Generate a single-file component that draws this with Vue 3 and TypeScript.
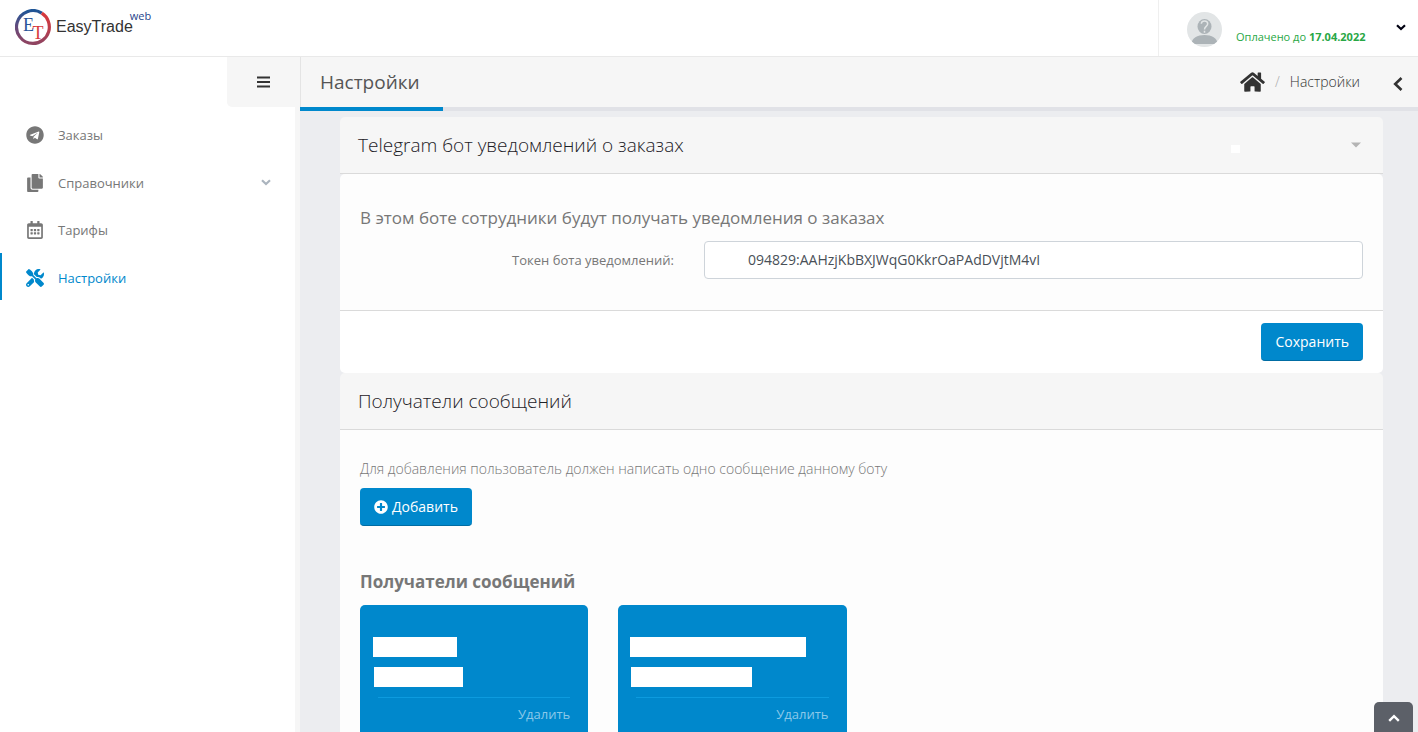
<script setup lang="ts">
import { ref } from 'vue'

interface MenuItem {
  label: string
  viewBox: string
  path: string
  active?: boolean
  expandable?: boolean
}

interface Recipient {
  id: number
  indent: number
  lines: { width: number; shift: number }[]
}

const token = ref('094829:AAHzjKbBXJWqG0KkrOaPAdDVjtM4vI')

const menu: MenuItem[] = [
  {
    label: 'Заказы',
    viewBox: '0 0 496 512',
    path: 'M248 8C111 8 0 119 0 256s111 248 248 248 248-111 248-248S385 8 248 8zm121.8 169.9l-40.7 191.8c-3 13.6-11.1 16.9-22.4 10.5l-62-45.7-29.9 28.8c-3.3 3.3-6.1 6.1-12.5 6.1l4.4-63.1 114.9-103.8c5-4.4-1.1-6.9-7.7-2.5l-142 89.4-61.2-19.1c-13.3-4.2-13.6-13.3 2.8-19.7l239.1-92.2c11.1-4 20.8 2.7 17.2 19.5z',
  },
  {
    label: 'Справочники',
    viewBox: '0 0 448 512',
    path: 'M320 448v40c0 13.255-10.745 24-24 24H24c-13.255 0-24-10.745-24-24V120c0-13.255 10.745-24 24-24h72v296c0 30.879 25.121 56 56 56h168zm0-344V0H152c-13.255 0-24 10.745-24 24v368c0 13.255 10.745 24 24 24h272c13.255 0 24-10.745 24-24V128H344c-13.2 0-24-10.8-24-24zm120.971-31.029L375.029 7.029A24 24 0 0 0 358.059 0H352v96h96v-6.059a24 24 0 0 0-7.029-16.97z',
    expandable: true,
  },
  {
    label: 'Тарифы',
    viewBox: '0 0 448 512',
    path: 'M148 288h-40c-6.6 0-12-5.4-12-12v-40c0-6.6 5.4-12 12-12h40c6.6 0 12 5.4 12 12v40c0 6.6-5.4 12-12 12zm108-12v-40c0-6.6-5.4-12-12-12h-40c-6.6 0-12 5.4-12 12v40c0 6.6 5.4 12 12 12h40c6.6 0 12-5.4 12-12zm96 0v-40c0-6.6-5.4-12-12-12h-40c-6.6 0-12 5.4-12 12v40c0 6.6 5.4 12 12 12h40c6.6 0 12-5.4 12-12zm-96 96v-40c0-6.6-5.4-12-12-12h-40c-6.6 0-12 5.4-12 12v40c0 6.6 5.4 12 12 12h40c6.6 0 12-5.4 12-12zm-96 0v-40c0-6.6-5.4-12-12-12h-40c-6.6 0-12 5.4-12 12v40c0 6.6 5.4 12 12 12h40c6.6 0 12-5.4 12-12zm192 0v-40c0-6.6-5.4-12-12-12h-40c-6.6 0-12 5.4-12 12v40c0 6.6 5.4 12 12 12h40c6.6 0 12-5.4 12-12zm96-260v352c0 26.5-21.5 48-48 48H48c-26.5 0-48-21.5-48-48V112c0-26.5 21.5-48 48-48h48V12c0-6.6 5.4-12 12-12h40c6.6 0 12 5.4 12 12v52h128V12c0-6.6 5.4-12 12-12h40c6.6 0 12 5.4 12 12v52h48c26.5 0 48 21.5 48 48zm-48 346V160H48v298c0 3.3 2.7 6 6 6h340c3.3 0 6-2.7 6-6z',
  },
  {
    label: 'Настройки',
    viewBox: '0 0 512 512',
    path: 'M501.1 395.7L384 278.6c-23.1-23.1-57.6-27.6-85.4-13.9L206 172L206 128C200 96 120 0 76 0L0 76C0 120 96 200 128 206L172 206L264.700 298.600c-13.6 27.8-9.2 62.3 13.9 85.4l117.1 117.1c14.6 14.6 38.2 14.6 52.7 0l52.7-52.7c14.5-14.6 14.5-38.2 0-52.7zM331.7 225c28.3 0 54.9 11 74.9 31l19.4 19.4c15.8-6.9 30.8-16.5 43.8-29.5 37.1-37.1 49.7-89.3 37.9-136.7-2.2-9-13.5-12.1-20.1-5.5l-74.4 74.4-67.9-11.3L334 98.9l74.4-74.4c6.6-6.6 3.4-17.9-5.7-20.2-47.4-11.7-99.6.9-136.6 37.9-28.5 28.5-41.9 66.1-41.2 103.6l82.1 82.1c8.1-1.9 16.5-2.9 24.7-2.9zm-103.9 82l-56.7-56.7L18.7 402.8c-25 25-25 65.5 0 90.5s65.5 25 90.5 0l123.6-123.6c-7.6-19.9-9.9-41.6-5-62.7zM64 472c-13.2 0-24-10.8-24-24 0-13.3 10.7-24 24-24s24 10.7 24 24c0 13.2-10.7 24-24 24z',
    active: true,
  },
]

const recipients: Recipient[] = [
  { id: 1, indent: 13, lines: [{ width: 84, shift: 0 }, { width: 89, shift: 1 }] },
  { id: 2, indent: 12, lines: [{ width: 176, shift: 0 }, { width: 121, shift: 1 }] },
]
</script>

<template>
  <div class="app">
    <header class="topbar">
      <a class="brand" href="#" aria-label="EasyTrade web">
        <svg class="brand-mark" viewBox="0 0 36 36" aria-hidden="true">
          <defs>
            <linearGradient id="ring-left" x1="0" y1="0" x2="0" y2="1">
              <stop offset="0" stop-color="#1f5596" />
              <stop offset="0.5" stop-color="#654a7c" />
              <stop offset="1" stop-color="#8f4461" />
            </linearGradient>
            <linearGradient id="ring-right" x1="0" y1="0" x2="0" y2="1">
              <stop offset="0" stop-color="#d8383c" />
              <stop offset="0.5" stop-color="#bd3d4b" />
              <stop offset="1" stop-color="#8f4461" />
            </linearGradient>
          </defs>
          <path d="M26.8 4.2A16.4 16.4 0 1 0 18 34.4" fill="none" stroke="url(#ring-left)" stroke-width="3.2" />
          <path d="M26.8 4.2A16.4 16.4 0 0 1 18 34.4" fill="none" stroke="url(#ring-right)" stroke-width="3.2" />
          <text x="8" y="22" class="mark-e">E</text>
          <text x="17.500" y="30" class="mark-t">T</text>
        </svg>
        <span class="brand-name">EasyTrade</span>
        <span class="brand-web">web</span>
      </a>
      <div class="user">
        <svg class="avatar" viewBox="0 0 35 35" aria-hidden="true">
          <defs>
            <clipPath id="avatar-clip"><circle cx="17.5" cy="17.5" r="17.5" /></clipPath>
          </defs>
          <g clip-path="url(#avatar-clip)">
            <rect width="35" height="35" fill="#e2e5e6" />
            <ellipse cx="17.5" cy="14.5" rx="7" ry="7.5" fill="#acb3b7" />
            <path d="M4.500 32c0-6 6-9 13-9s13 3 13 9z" fill="#acb3b7" />
          </g>
          <path d="M14.300 11.800c.2-3.800 6.400-3.600 6.400 0 0 2.600-3.200 2.600-3.200 5.600M17.500 18.800v2" fill="none" stroke="#e2e5e6" stroke-width="1.500" />
        </svg>
        <span class="paid">Оплачено до <b>17.04.2022</b></span>
        <button class="icon-btn user-toggle" type="button" aria-label="Меню пользователя">
          <svg width="10" height="7" viewBox="0 0 10 7" aria-hidden="true">
            <path d="M1 1.200l4 3.800 4-3.800" fill="none" stroke="#000011" stroke-width="2.200" />
          </svg>
        </button>
      </div>
    </header>

    <div class="shell">
      <aside class="sidebar">
        <button class="icon-btn menu-toggle" type="button" aria-label="Свернуть меню">
          <svg width="13" height="12" viewBox="0 0 13 12" aria-hidden="true">
            <path d="M0 1.500h13M0 6h13M0 10.500h13" stroke="#333" stroke-width="1.800" />
          </svg>
        </button>
        <nav class="menu">
          <a v-for="item in menu" :key="item.label" href="#" class="menu-item" :class="{ active: item.active }">
            <svg class="menu-icon" :viewBox="item.viewBox" aria-hidden="true"><path :d="item.path" /></svg>
            <span class="menu-label">{{ item.label }}</span>
            <svg v-if="item.expandable" class="menu-arrow" viewBox="0 0 10 7" aria-hidden="true">
              <path d="M1 1.200l4 3.800 4-3.800" fill="none" stroke="#abb4be" stroke-width="2.200" />
            </svg>
          </a>
        </nav>
      </aside>

      <main class="content">
        <div class="page-header">
          <h1>Настройки</h1>
          <nav class="crumbs">
            <a href="#" aria-label="Главная">
              <svg width="25" height="22" viewBox="0 0 576 512" aria-hidden="true">
                <path fill="#333" d="M280.370 148.260L96 300.110V464a16 16 0 0 0 16 16l112.060-.29a16 16 0 0 0 15.920-16V368a16 16 0 0 1 16-16h64a16 16 0 0 1 16 16v95.640a16 16 0 0 0 16 16.050L464 480a16 16 0 0 0 16-16V300L295.670 148.260a12.190 12.190 0 0 0-15.300 0zM571.600 251.470L488 182.560V44.050a12 12 0 0 0-12-12h-56a12 12 0 0 0-12 12v72.610L318.470 43a48 48 0 0 0-61 0L4.340 251.470a12 12 0 0 0-1.600 16.900l25.500 31A12 12 0 0 0 45.150 301l235.220-193.740a12.190 12.190 0 0 1 15.300 0L530.900 301a12 12 0 0 0 16.900-1.600l25.500-31a12 12 0 0 0-1.700-16.930z" />
              </svg>
            </a>
            <span class="slash">/</span>
            <span class="crumb">Настройки</span>
          </nav>
          <button class="icon-btn side-toggle" type="button" aria-label="Открыть панель">
            <svg width="10" height="14" viewBox="0 0 10 14" aria-hidden="true">
              <path d="M8.500 1L2.200 7l6.300 6" fill="none" stroke="#333" stroke-width="2.600" />
            </svg>
          </button>
        </div>
        <div class="progress"><div class="progress-bar"></div></div>

        <div class="cards">
          <form class="card" @submit.prevent>
            <div class="card-head">
              <h2>Telegram бот уведомлений о заказах</h2>
              <span class="patch"></span>
              <button class="icon-btn" type="button" aria-label="Свернуть">
                <svg width="10" height="6" viewBox="0 0 10 6" aria-hidden="true">
                  <path d="M0 .5h10L5 5.500z" fill="#b4b4b4" />
                </svg>
              </button>
            </div>
            <div class="card-body bot-body">
              <p class="lead">В этом боте сотрудники будут получать уведомления о заказах</p>
              <div class="field">
                <label for="bot-token">Токен бота уведомлений:</label>
                <input id="bot-token" v-model="token" type="text" />
              </div>
            </div>
            <div class="card-foot">
              <button class="btn" type="submit">Сохранить</button>
            </div>
          </form>

          <section class="card">
            <div class="card-head">
              <h2>Получатели сообщений</h2>
            </div>
            <div class="card-body">
              <p class="hint">Для добавления пользователь должен написать одно сообщение данному боту</p>
              <button class="btn" type="button">
                <svg width="14" height="14" viewBox="0 0 512 512" aria-hidden="true">
                  <path fill="#fff" d="M256 8C119 8 8 119 8 256s111 248 248 248 248-111 248-248S393 8 256 8zm144 276c0 6.600-5.400 12-12 12h-92v92c0 6.600-5.400 12-12 12h-56c-6.600 0-12-5.400-12-12v-92h-92c-6.600 0-12-5.400-12-12v-56c0-6.600 5.400-12 12-12h92v-92c0-6.600 5.400-12 12-12h56c6.600 0 12 5.400 12 12v92h92c6.600 0 12 5.400 12 12v56z" />
                </svg>
                Добавить
              </button>
              <h3>Получатели сообщений</h3>
              <div class="recipients">
                <article v-for="person in recipients" :key="person.id" class="recipient">
                  <div class="lines" :style="{ paddingLeft: person.indent + 'px' }">
                    <span
                      v-for="(line, i) in person.lines"
                      :key="i"
                      class="line"
                      :style="{ width: line.width + 'px', marginLeft: line.shift + 'px' }"
                    ></span>
                  </div>
                  <div class="recipient-foot">
                    <a href="#">Удалить</a>
                  </div>
                </article>
              </div>
            </div>
          </section>
        </div>
      </main>
    </div>

    <button class="to-top" type="button" aria-label="Наверх">
      <svg width="12" height="8" viewBox="0 0 12 8" aria-hidden="true">
        <path d="M1.200 6.800L6 2.200l4.800 4.600" fill="none" stroke="#fff" stroke-width="2.400" />
      </svg>
    </button>
  </div>
</template>

<style>
body {
  margin: 0;
}
</style>

<style scoped>
* {
  box-sizing: border-box;
}

.app {
  display: flex;
  flex-direction: column;
  height: 100vh;
  background: #fff;
  color: #777;
  font-family: "Open Sans", "Noto Sans", sans-serif;
  font-size: 14px;
  line-height: 22px;
}

h1,
h2,
h3,
p {
  margin: 0;
}

a {
  color: inherit;
  text-decoration: none;
}

svg {
  display: block;
  flex: none;
}

.icon-btn {
  display: flex;
  align-items: center;
  justify-content: center;
  padding: 0;
  border: 0;
  background: none;
  cursor: pointer;
}

.topbar {
  display: flex;
  justify-content: space-between;
  flex: none;
  height: 57px;
  border-bottom: 1px solid #e9e9e9;
}

.brand {
  display: flex;
  padding: 9px 0 0 15px;
}

.brand-mark {
  width: 36px;
  height: 36px;
}

.mark-e,
.mark-t {
  font-family: "Liberation Serif", serif;
  font-size: 18px;
  fill: #2a5599;
}

.mark-t {
  fill: #d8383c;
}

.brand-name {
  margin-left: 5px;
  color: #333;
  font-family: "Liberation Sans", sans-serif;
  font-size: 16px;
  line-height: 36px;
}

.brand-web {
  margin-left: -3px;
  color: #1f458c;
  font-size: 11px;
  font-weight: 500;
  line-height: 13px;
}

.user {
  display: flex;
  align-items: center;
  padding: 2px 12px 0 28px;
  border-left: 1px solid #efefef;
}

.avatar {
  width: 35px;
  height: 35px;
}

.paid {
  min-width: 132px;
  margin-left: 14px;
  padding-top: 16px;
  color: #28a745;
  font-size: 11px;
  line-height: 16px;
}

.user-toggle {
  margin: -4px 0 0 28px;
}

.shell {
  display: flex;
  flex: 1;
  min-height: 0;
}

.sidebar {
  flex: none;
  width: 300px;
  border-right: 5px solid #f6f6f6;
}

.menu-toggle {
  width: 73px;
  height: 50px;
  margin: 0 -5px 0 auto;
  border-radius: 0 0 0 5px;
  background: #f6f6f6;
}

.menu {
  display: grid;
  grid-template-rows: repeat(4, 1fr);
  height: 190px;
  margin-top: 3px;
}

.menu-item {
  display: flex;
  align-items: center;
  padding: 3px 24px 0 24px;
  border-left: 2px solid transparent;
  font-size: 13px;
}

.menu-item.active {
  border-color: #0088cc;
  color: #0088cc;
}

.menu-icon {
  width: 18px;
  height: 18px;
  fill: currentColor;
}

.menu-label {
  flex: 1;
  margin-left: 14px;
}

.menu-arrow {
  width: 10px;
  height: 7px;
}

.content {
  flex: 1;
  min-width: 0;
  overflow: auto;
  scrollbar-width: none;
  background: #ecedf0;
}

.page-header {
  display: flex;
  align-items: center;
  height: 50px;
  padding: 0 15px 0 19px;
  border-left: 1px solid #e4e4e4;
  background: #f6f6f6;
}

.page-header h1 {
  flex: 1;
  color: #555;
  font-size: 19px;
  font-weight: 400;
}

.crumbs {
  display: flex;
  align-items: center;
  margin-right: 33px;
  font-weight: 300;
}

.slash {
  margin: 0 10px;
  color: #aaa;
}

.crumb {
  color: #333;
}

.side-toggle {
  padding-top: 3px;
}

.progress {
  height: 4px;
  background: #e1e2e7;
}

.progress-bar {
  width: 143px;
  height: 4px;
  background: #0088cc;
}

.cards {
  padding: 6px 35px 0 40px;
}

.card-head {
  display: flex;
  align-items: center;
  height: 57px;
  padding: 0 22px 0 18px;
  border-bottom: 1px solid #dadada;
  border-radius: 5px 5px 0 0;
  background: #f6f6f6;
}

.card-head h2 {
  flex: 1;
  color: #1d2127;
  font-size: 19px;
  font-weight: 300;
}

.patch {
  width: 9px;
  height: 8px;
  margin: 7px 111px 0 0;
  background: #fff;
}

.card-body {
  padding: 28px 20px 20px;
  background: #fdfdfd;
}

.bot-body {
  padding: 32px 20px 31px;
  border-radius: 5px 5px 0 0;
}

.lead {
  margin-bottom: 12px;
  font-size: 17px;
  line-height: 23px;
}

.field {
  display: grid;
  grid-template-columns: minmax(0, 314fr) minmax(0, 659fr);
  align-items: center;
  gap: 30px;
}

.field label {
  font-size: 13px;
  text-align: right;
}

.field input {
  width: 100%;
  height: 38px;
  padding: 0 12px 2px 43px;
  border: 1px solid #ced4da;
  border-radius: 4px;
  background: #fff;
  color: #495057;
  font: inherit;
}

.card-foot {
  display: flex;
  justify-content: flex-end;
  padding: 12px 20px;
  border-top: 1px solid #dadada;
  border-radius: 0 0 5px 5px;
  background: #fff;
}

.btn {
  display: flex;
  align-items: center;
  gap: 4px;
  height: 38px;
  padding: 0 14px;
  border: 0;
  border-bottom: 1px solid #006ca3;
  border-radius: 4px;
  background: #0088cc;
  color: #fff;
  font: inherit;
  font-weight: 500;
  cursor: pointer;
}

.hint {
  margin-bottom: 8px;
  font-weight: 300;
}

.card-body h3 {
  margin: 45px 0 12px;
  font-size: 17px;
  font-weight: 700;
  line-height: 22px;
}

.recipients {
  display: grid;
  grid-template-columns: repeat(4, minmax(0, 1fr));
  gap: 30px;
}

.recipient {
  padding-top: 32px;
  border-radius: 5px;
  background: #0088cc;
}

.lines {
  display: flex;
  flex-direction: column;
  gap: 10px;
}

.line {
  height: 20px;
  background: #fff;
}

.recipient-foot {
  margin: 10px 18px 0;
  padding: 5px 0 18px;
  border-top: 1px solid #0d9bde;
  color: #8cc9e9;
  font-size: 13px;
  font-weight: 500;
  text-align: right;
}

.to-top {
  position: fixed;
  right: 5px;
  bottom: 0;
  display: flex;
  justify-content: center;
  width: 39px;
  height: 30px;
  padding: 12px 0 0;
  border: 0;
  border-radius: 5px 5px 0 0;
  background: #5c6068;
  cursor: pointer;
}
</style>
